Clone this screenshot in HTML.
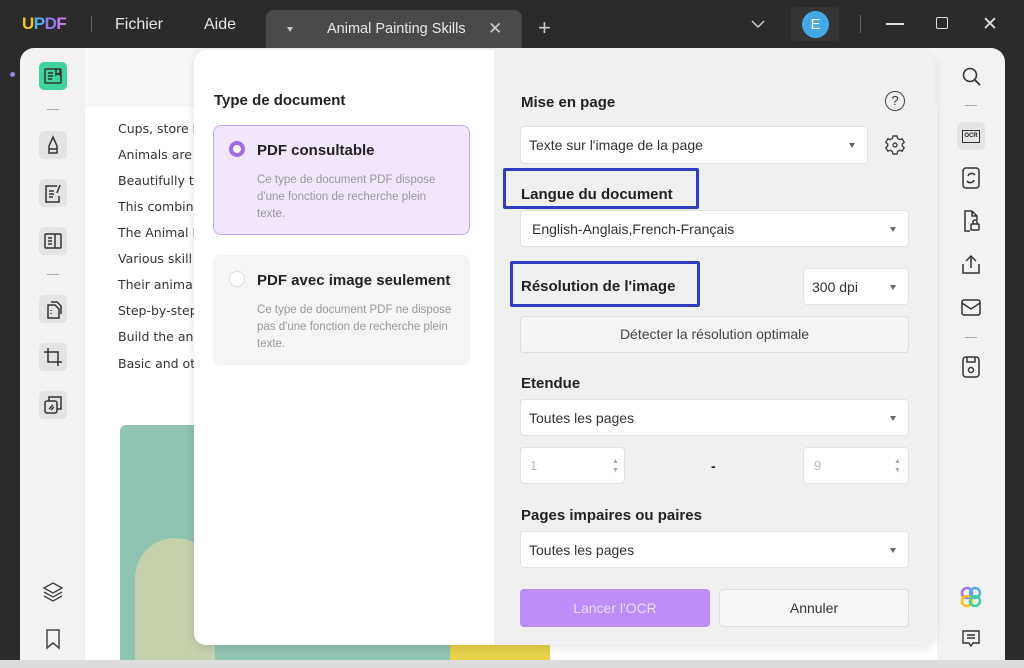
<!DOCTYPE html>
<html><head><meta charset="utf-8"><style>
*{box-sizing:border-box;margin:0;padding:0}
body{width:1024px;height:668px;overflow:hidden;background:#2b2b2b;font-family:"Liberation Sans",sans-serif;position:relative;color:#222}
.abs{position:absolute}
.tb{color:#e8e8e8;font-size:16px}
.sel{position:absolute;background:#fff;border:1px solid #e2e2e2;border-radius:4px;font-size:14px;color:#333;padding-left:8px;display:flex;align-items:center}
.sel:after{content:"";position:absolute;right:12px;top:50%;margin-top:-2px;border-left:3.5px solid transparent;border-right:3.5px solid transparent;border-top:5px solid #666}
.lbl{position:absolute;font-weight:bold;font-size:15px;color:#222}
.doc{position:absolute;left:118px;color:#333;font-family:"DejaVu Sans",sans-serif;font-size:12.5px}
.ic{position:absolute;width:28px;height:28px;border-radius:5px;background:#e4e4e4}
svg.s path,svg.s rect{fill:none;stroke:#333;stroke-width:1.5}
</style></head><body>
<div class="abs" style="left:22px;top:14px;font-weight:bold;font-size:17px;letter-spacing:-0.5px"><span style="color:#f4c21b">U</span><span style="color:#4fb0ef">P</span><span style="color:#8e7cf0">D</span><span style="color:#c97af0">F</span></div>
<div class="abs" style="left:91px;top:16px;width:1px;height:16px;background:#666"></div>
<div class="abs tb" style="left:115px;top:16px">Fichier</div>
<div class="abs tb" style="left:204px;top:16px">Aide</div>
<div class="abs" style="left:266px;top:10px;width:256px;height:40px;background:#4a4a4a;border-radius:8px 8px 0 0"></div>
<div class="abs" style="left:287px;top:27px;border-left:3.5px solid transparent;border-right:3.5px solid transparent;border-top:5px solid #ccc"></div>
<div class="abs tb" style="left:327px;top:21px;font-size:14.5px">Animal Painting Skills</div>
<div class="abs tb" style="left:488px;top:19px;font-size:17px;color:#ccc">✕</div>
<div class="abs tb" style="left:538px;top:15px;font-size:22px;color:#ccc">+</div>
<svg class="abs" style="left:750px;top:18px" width="16" height="12"><path d="M2 3l6 6 6-6" stroke="#ccc" stroke-width="1.5" fill="none"/></svg>
<div class="abs" style="left:791px;top:7px;width:48px;height:34px;background:#353535;border-radius:4px"></div>
<div class="abs" style="left:802px;top:11px;width:27px;height:27px;border-radius:50%;background:#45a8e6;color:#fff;font-size:15px;text-align:center;line-height:27px">E</div>
<div class="abs" style="left:860px;top:15px;width:1px;height:18px;background:#666"></div>
<div class="abs" style="left:886px;top:23px;width:18px;height:1.5px;background:#ddd"></div>
<div class="abs" style="left:936px;top:17px;width:12px;height:12px;border:1.5px solid #ddd;border-radius:2px"></div>
<div class="abs tb" style="left:982px;top:13px;font-size:19px;color:#ddd">✕</div>
<div class="abs" style="left:0;top:660px;width:1024px;height:8px;background:#dcdcdc"></div>
<div class="abs" style="left:20px;top:48px;width:985px;height:612px;background:#f2f2f2;border-radius:14px 14px 0 0;overflow:hidden">
 <div class="abs" style="left:65px;top:0;width:852px;height:612px;background:#fff"></div>
 <div class="abs" style="left:65px;top:0;width:852px;height:59px;background:#f7f7f7"></div>
 <div class="abs" style="left:100px;top:377px;width:430px;height:235px;background:#8fc4b0;border-radius:6px 0 0 0"></div>
 <div class="abs" style="left:115px;top:490px;width:80px;height:122px;background:#c5d0ad;border-radius:40px 40px 0 0"></div>
 <div class="abs" style="left:430px;top:585px;width:100px;height:27px;background:#e8d24a"></div>
</div>
<div class="abs" style="left:10px;top:72px;width:5px;height:5px;border-radius:50%;background:#9b80e0"></div>
<div class="ic" style="left:39px;top:62px;background:#3ed39a"></div>
<svg class="abs s" style="left:42px;top:65px" width="22" height="22"><rect x="3" y="4" width="16" height="14" rx="1"/><path d="M6 8h5M6 11h5M6 14h4M14 4v6l2-1.5 2 1.5V4"/></svg>
<div class="abs" style="left:47px;top:109px;width:12px;height:1px;background:#aaa"></div>
<div class="ic" style="left:39px;top:131px"></div>
<svg class="abs s" style="left:42px;top:134px" width="22" height="22"><path d="M7 12l4-9 4 9v7H7z M7 15h8"/></svg>
<div class="ic" style="left:39px;top:179px"></div>
<svg class="abs s" style="left:42px;top:182px" width="22" height="22"><path d="M15 4H4v16h13v-6 M7 9h5M7 12h5M7 15h4 M18 3l-3 8"/></svg>
<div class="ic" style="left:39px;top:227px"></div>
<svg class="abs s" style="left:42px;top:230px" width="22" height="22"><rect x="3" y="4" width="16" height="14" rx="1"/><path d="M13 4v14M6 8h4M6 11h4M6 14h4"/></svg>
<div class="abs" style="left:47px;top:274px;width:12px;height:1px;background:#aaa"></div>
<div class="ic" style="left:39px;top:295px"></div>
<svg class="abs s" style="left:42px;top:298px" width="22" height="22"><path d="M6 7h7l4 4v9H6z M9 4h6l4 4v8 M9 12v1M9 15v1"/></svg>
<div class="ic" style="left:39px;top:343px"></div>
<svg class="abs s" style="left:42px;top:346px" width="22" height="22"><path d="M6 2v14h14 M2 6h14v14"/></svg>
<div class="ic" style="left:39px;top:391px"></div>
<svg class="abs s" style="left:42px;top:394px" width="22" height="22"><rect x="3" y="7" width="12" height="12" rx="2"/><path d="M7 7V3h12v12h-4 M7 15l4-4M9 16l3-3"/></svg>
<svg class="abs" style="left:41px;top:580px" width="24" height="22"><path d="M12 3l9 5-9 5-9-5z M3 12l9 5 9-5 M3 16l9 5 9-5" stroke="#444" stroke-width="1.4" fill="none"/></svg>
<svg class="abs" style="left:44px;top:628px" width="18" height="22"><path d="M3 2h12v18l-6-5-6 5z" stroke="#444" stroke-width="1.5" fill="none"/></svg>
<div class="doc" style="top:121px">Cups, store b</div>
<div class="doc" style="top:147px">Animals are</div>
<div class="doc" style="top:173px">Beautifully t</div>
<div class="doc" style="top:199px">This combin</div>
<div class="doc" style="top:225px">The Animal D</div>
<div class="doc" style="top:251px">Various skill</div>
<div class="doc" style="top:277px">Their anima</div>
<div class="doc" style="top:303px">Step-by-step</div>
<div class="doc" style="top:329px">Build the an</div>
<div class="doc" style="top:356px">Basic and ot</div>
<div class="abs" style="left:194px;top:50px;width:741px;height:595px;background:#f0f0f0;border-radius:12px;box-shadow:0 2px 10px rgba(0,0,0,.12);overflow:hidden">
 <div class="abs" style="left:0;top:0;width:300px;height:595px;background:#fff"></div>
</div>
<div class="lbl" style="left:214px;top:92px">Type de document</div>
<div class="abs" style="left:213px;top:125px;width:257px;height:110px;background:#f2e6fd;border:1px solid #c9a8ee;border-radius:8px"></div>
<div class="abs" style="left:229px;top:141px;width:16px;height:16px;border-radius:50%;background:#fff;border:4px solid #a06ae8"></div>
<div class="abs" style="left:257px;top:142px;font-weight:bold;font-size:15px">PDF consultable</div>
<div class="abs" style="left:257px;top:172px;font-size:11.5px;color:#999;line-height:17px;width:192px">Ce type de document PDF dispose d'une fonction de recherche plein texte.</div>
<div class="abs" style="left:213px;top:255px;width:257px;height:110px;background:#f5f5f5;border-radius:8px"></div>
<div class="abs" style="left:229px;top:271px;width:16px;height:16px;border-radius:50%;background:#fff;border:1px solid #ddd"></div>
<div class="abs" style="left:257px;top:272px;font-weight:bold;font-size:15px">PDF avec image seulement</div>
<div class="abs" style="left:257px;top:302px;font-size:11.5px;color:#999;line-height:17px;width:200px">Ce type de document PDF ne dispose pas d'une fonction de recherche plein texte.</div>
<div class="lbl" style="left:521px;top:94px">Mise en page</div>
<div class="abs" style="left:885px;top:91px;width:20px;height:20px;border:1.5px solid #444;border-radius:50%;font-size:13px;text-align:center;line-height:17px;color:#333">?</div>
<div class="sel" style="left:520px;top:126px;width:348px;height:38px">Texte sur l'image de la page</div>
<svg class="abs" style="left:884px;top:134px" width="22" height="22" viewBox="0 0 22 22"><path d="M9 2h4l.6 2.5 2.2 1.2 2.4-.8 2 3.4-1.9 1.7v2l1.9 1.7-2 3.4-2.4-.8-2.2 1.2L13 20H9l-.6-2.5-2.2-1.2-2.4.8-2-3.4 1.9-1.7v-2L1.8 8.3l2-3.4 2.4.8 2.2-1.2z" fill="none" stroke="#444" stroke-width="1.4"/><circle cx="11" cy="11" r="2" fill="none" stroke="#444" stroke-width="1.4"/></svg>
<div class="abs" style="left:503px;top:168px;width:196px;height:41px;border:3.5px solid #2f3ec0;border-radius:2px"></div>
<div class="lbl" style="left:521px;top:186px">Langue du document</div>
<div class="sel" style="left:520px;top:210px;width:389px;height:37px;padding-left:11px">English-Anglais,French-Français</div>
<div class="abs" style="left:510px;top:261px;width:190px;height:46px;border:3.5px solid #2f3ec0;border-radius:2px"></div>
<div class="lbl" style="left:521px;top:278px">Résolution de l'image</div>
<div class="sel" style="left:803px;top:268px;width:106px;height:37px">300 dpi</div>
<div class="abs" style="left:520px;top:316px;width:389px;height:37px;background:#f4f4f4;border:1px solid #ddd;border-radius:4px;text-align:center;line-height:35px;font-size:14px;color:#444">Détecter la résolution optimale</div>
<div class="lbl" style="left:521px;top:375px">Etendue</div>
<div class="sel" style="left:520px;top:399px;width:389px;height:37px">Toutes les pages</div>
<div class="abs" style="left:520px;top:447px;width:105px;height:37px;background:#fff;border:1px solid #e2e2e2;border-radius:4px;font-size:13px;color:#bbb;padding:10px 9px">1</div>
<div class="abs" style="left:711px;top:458px;font-weight:bold;font-size:14px">-</div>
<div class="abs" style="left:803px;top:447px;width:106px;height:37px;background:#fff;border:1px solid #e2e2e2;border-radius:4px;font-size:13px;color:#bbb;padding:10px 10px">9</div>
<div class="abs" style="left:612px;top:457px;font-size:7px;color:#aaa;line-height:9px">▲<br>▼</div>
<div class="abs" style="left:894px;top:457px;font-size:7px;color:#aaa;line-height:9px">▲<br>▼</div>
<div class="lbl" style="left:521px;top:507px">Pages impaires ou paires</div>
<div class="sel" style="left:520px;top:531px;width:389px;height:37px">Toutes les pages</div>
<div class="abs" style="left:520px;top:589px;width:190px;height:38px;background:#bd8ef7;border-radius:4px;color:#e8dcff;text-align:center;line-height:38px;font-size:14px">Lancer l'OCR</div>
<div class="abs" style="left:719px;top:589px;width:190px;height:38px;background:#f6f6f6;border:1px solid #ddd;border-radius:4px;color:#333;text-align:center;line-height:36px;font-size:14px">Annuler</div>
<svg class="abs" style="left:961px;top:66px" width="22" height="22"><circle cx="9" cy="9" r="6.5" fill="none" stroke="#333" stroke-width="1.6"/><path d="M14 14l5 5" stroke="#333" stroke-width="1.8"/></svg>
<div class="abs" style="left:965px;top:105px;width:12px;height:1px;background:#aaa"></div>
<div class="ic" style="left:957px;top:122px"></div>
<div class="abs" style="left:962px;top:130px;width:18px;height:13px;border:1.4px solid #333;font-size:6px;text-align:center;line-height:10px;font-weight:bold">OCR</div>
<svg class="abs s" style="left:960px;top:166px" width="22" height="24"><rect x="3" y="2" width="16" height="20" rx="3"/><path d="M8 10a4 4 0 0 1 7-1M14 14a4 4 0 0 1-7 1"/></svg>
<svg class="abs s" style="left:960px;top:209px" width="22" height="24"><path d="M12 2H5v20h5 M12 2l5 5v4 M12 2v5h5"/><rect x="11" y="15" width="8" height="6" rx="1"/><path d="M13 15v-2a2 2 0 0 1 4 0v2"/></svg>
<svg class="abs" style="left:960px;top:254px" width="22" height="22"><path d="M11 2v12M6 7l5-5 5 5M3 10v9h16v-9" stroke="#333" stroke-width="1.5" fill="none"/></svg>
<svg class="abs" style="left:960px;top:298px" width="22" height="20"><rect x="2" y="2" width="18" height="15" rx="2" fill="none" stroke="#333" stroke-width="1.5"/><path d="M2 5l9 6 9-6" stroke="#333" stroke-width="1.5" fill="none"/></svg>
<div class="abs" style="left:965px;top:337px;width:12px;height:1px;background:#aaa"></div>
<svg class="abs s" style="left:960px;top:355px" width="22" height="24"><rect x="3" y="2" width="16" height="20" rx="3"/><path d="M7 2v5h8V2"/><circle cx="11" cy="15" r="2.5" fill="none" stroke="#333" stroke-width="1.5"/></svg>
<svg class="abs" style="left:959px;top:585px" width="24" height="24"><circle cx="8" cy="8" r="5" fill="none" stroke="#a970f0" stroke-width="2.5"/><circle cx="16" cy="8" r="5" fill="none" stroke="#4fb0ef" stroke-width="2.5"/><circle cx="8" cy="16" r="5" fill="none" stroke="#f4c21b" stroke-width="2.5"/><circle cx="16" cy="16" r="5" fill="none" stroke="#3ed39a" stroke-width="2.5"/></svg>
<svg class="abs" style="left:961px;top:629px" width="20" height="20"><path d="M2 2h16v12h-6l-2 3-2-3H2z M6 6h8M6 9h8" stroke="#333" stroke-width="1.4" fill="none"/></svg>
</body></html>
